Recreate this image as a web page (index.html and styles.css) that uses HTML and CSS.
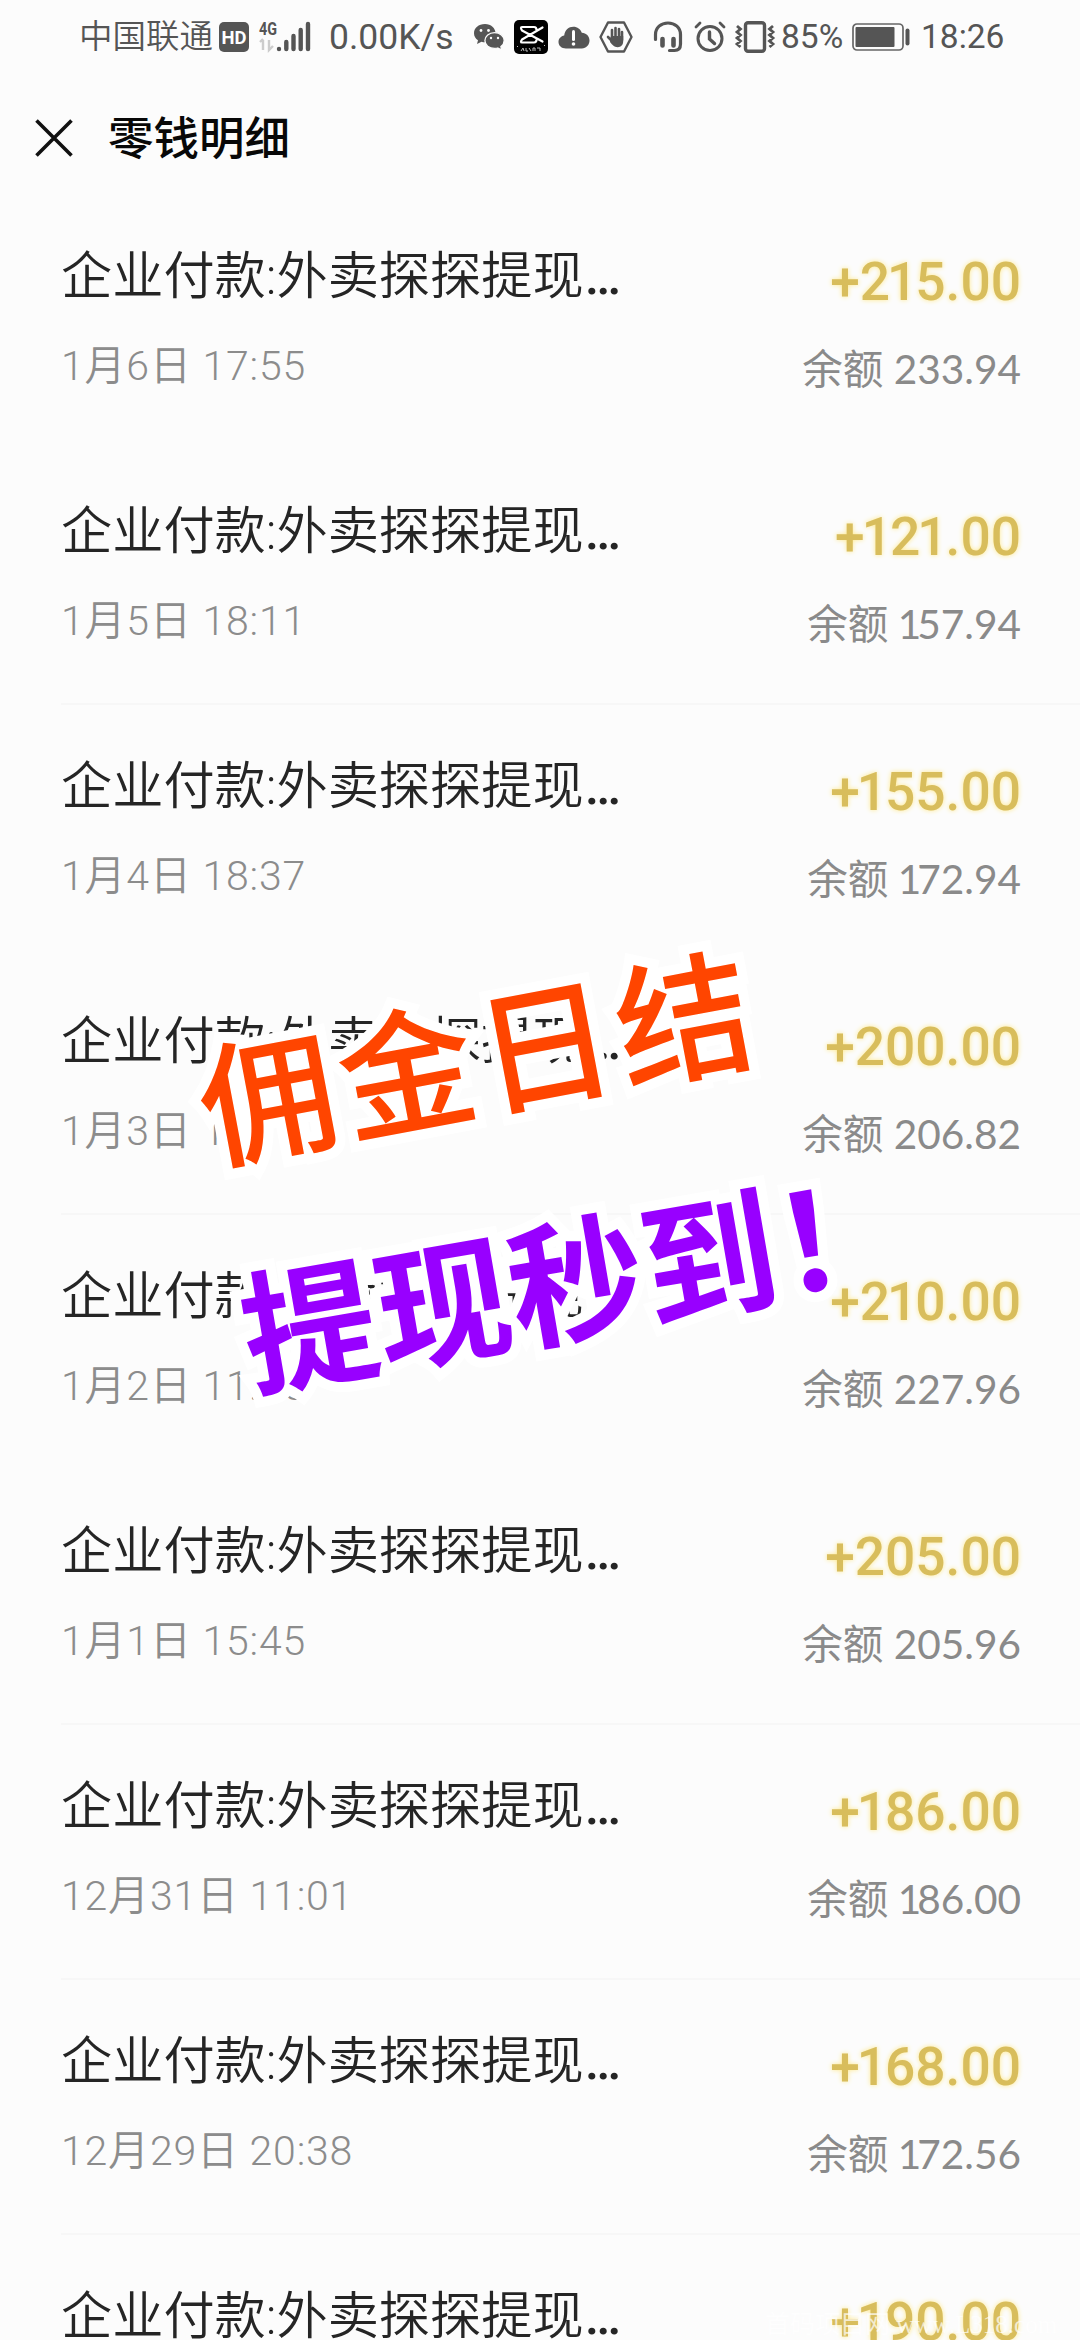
FILE: index.html
```html
<!DOCTYPE html>
<html lang="zh-CN">
<head>
<meta charset="utf-8">
<title>零钱明细</title>
<link rel="stylesheet" href="styles.css">
</head>
<body>
<div class="screen">
  <div class="status">
    <span class="carrier">中国联通</span>
    <svg class="hd" width="30" height="30" viewBox="0 0 30 30"><rect width="30" height="30" rx="5" fill="#555"/><text x="15" y="22" text-anchor="middle" textLength="25" lengthAdjust="spacingAndGlyphs" font-family="Roboto, sans-serif" font-weight="700" font-size="19" fill="#fff">HD</text></svg>
    <svg class="signal" width="52" height="34" viewBox="0 0 52 34"><text x="0" y="16" textLength="18" lengthAdjust="spacingAndGlyphs" font-family="Roboto, sans-serif" font-weight="700" font-size="19" fill="#555">4G</text><g stroke="#555" stroke-width="4.4" stroke-linecap="round"><path d="M20 30v0M27.300 23v7M34.500 17v13M41.700 11v19M49 5v25"/></g><path d="M4 21v10M1 23l3-3M10 21v10l4-4" fill="none" stroke="#ccc" stroke-width="2.4"/></svg>
    <span class="speed">0.00K/s</span>
    <svg class="wechat" width="32" height="28" viewBox="0 0 32 28"><path d="M12 1C5.500 1 1 5 1 10.200c0 3 1.600 5.400 4 7L4 21l4.500-2.300c1.200.4 2.300.5 3.500.5 6 0 10.500-4 10.500-9S18 1 12 1z" fill="#555"/><path d="M21.500 9.600c5.500 0 9.700 3.500 9.700 8 0 2.500-1.300 4.600-3.300 6l.8 3.400-4-2c-1 .3-2 .4-3.200.4-5.400 0-9.600-3.400-9.600-7.800s4.200-8 9.600-8z" fill="#555" stroke="#fcfcfc" stroke-width="1.300"/><g fill="#fcfcfc"><circle cx="8" cy="7.500" r="1.400"/><circle cx="15.500" cy="7.500" r="1.400"/><circle cx="18" cy="15" r="1.200"/><circle cx="25" cy="15" r="1.200"/></g></svg>
    <svg class="capcut" width="34" height="34" viewBox="0 0 34 34"><rect width="34" height="34" rx="5" fill="#000"/><path d="M28.500 7.500L8 19.500Q6 22.500 8 22.500h12q2.500 0 2.500-3M28.500 21.500L8 10.500Q6 7 8 7h12q2.500 0 2.500 3" fill="none" stroke="#fff" stroke-width="2.200" stroke-linejoin="round" stroke-linecap="round"/><path d="M3 26l1 1M7 31l2-3 1 3M12 28v3h2M15 28l2 3M19 31v-3h2v3M23 28h3v3M31 25l-1 1" fill="none" stroke="#bbb" stroke-width="1"/></svg>
    <svg class="cloud" width="32" height="23" viewBox="0 0 32 23"><path d="M8 22.500C3.500 22.500.5 19.600.5 16c0-3.400 2.500-6 5.700-6.500C7 4 10.600.700 15.300.7c4.200 0 7.200 2.500 8.500 6 4.500.2 7.700 3.500 7.700 7.800s-3.200 8-7.700 8z" fill="#555"/><path d="M15.500 5.500v8" stroke="#fff" stroke-width="3" stroke-linecap="round"/><circle cx="15.500" cy="18" r="1.800" fill="#fff"/></svg>
    <svg class="hand" width="34" height="32" viewBox="0 0 34 32"><path d="M9 1.500h16L32.500 16 25 30.500H9L1.500 16z" fill="none" stroke="#555" stroke-width="2.400" stroke-linejoin="round"/><g stroke="#555" stroke-width="2.600" stroke-linecap="round"><path d="M13 9v9M16.500 7v10M20 8v9M23 11v8M9 16l5 5"/></g><path d="M12 15h12.200v5c0 4-2.200 6.200-5.400 6.200-4 0-5.500-2.500-7.800-5.200z" fill="#555"/></svg>
    <svg class="headset" width="30" height="32" viewBox="0 0 30 32"><path d="M2.500 18.500v-5C2.500 6.500 8 2 15 2s12.500 4.500 12.500 11.500V23c0 4.500-2.500 6.500-6 6.500h-5" fill="none" stroke="#555" stroke-width="3.200" stroke-linecap="round"/><path d="M9.500 18v6.500M20.500 18v6.500" stroke="#555" stroke-width="4.600" stroke-linecap="round"/></svg>
    <svg class="alarm" width="32" height="32" viewBox="0 0 32 32"><g fill="none" stroke="#555" stroke-linecap="round"><circle cx="16" cy="17.500" r="12" stroke-width="3"/><path d="M15.500 11v7l5 4.500" stroke-width="3.400"/><path d="M2 6l4-4M30 6l-4-4" stroke-width="2.800"/></g></svg>
    <svg class="vibrate" width="40" height="32" viewBox="0 0 40 32"><rect x="10.500" y="1.800" width="19" height="28.400" rx="2.500" fill="none" stroke="#555" stroke-width="3.400"/><path d="M2 5l3.500 3L2 11l3.500 3L2 17l3.500 3L2 23l3.500 3M38 5l-3.500 3 3.500 3-3.500 3 3.500 3-3.500 3 3.500 3-3.500 3" fill="none" stroke="#555" stroke-width="2.800"/></svg>
    <span class="percent">85%</span>
    <svg class="battery" width="58" height="28" viewBox="0 0 58 28"><rect x="1" y="1" width="50" height="26" rx="4" fill="none" stroke="#666" stroke-width="1.700"/><rect x="3.500" y="4" width="39" height="20" rx="1" fill="#555"/><path d="M55.500 7.500v13" stroke="#555" stroke-width="4" stroke-linecap="round"/></svg>
    <span class="clock">18:26</span>
  </div>
  <header class="header">
    <svg width="38" height="38" viewBox="0 0 38 38"><path d="M1.500 1.500l35 35M36.500 1.500l-35 35" stroke="#111" stroke-width="3.600"/></svg>
    <h1>零钱明细</h1>
  </header>
  <main>
    <div class="row"><div class="left"><p class="name">企业付款:外卖探探提现<b>…</b></p><p class="date">1月6日 17:55</p></div><div class="right"><p class="amount">+2<i>1</i>5.00</p><p class="balance">余额 233.94</p></div></div>
    <div class="row line"><div class="left"><p class="name">企业付款:外卖探探提现<b>…</b></p><p class="date">1月5日 18:11</p></div><div class="right"><p class="amount">+<i>1</i>2<i>1</i>.00</p><p class="balance">余额 <i>1</i>57.94</p></div></div>
    <div class="row"><div class="left"><p class="name">企业付款:外卖探探提现<b>…</b></p><p class="date">1月4日 18:37</p></div><div class="right"><p class="amount">+<i>1</i>55.00</p><p class="balance">余额 <i>1</i>72.94</p></div></div>
    <div class="row line"><div class="left"><p class="name">企业付款:外卖探探提现<b>…</b></p><p class="date">1月3日 1</p></div><div class="right"><p class="amount">+200.00</p><p class="balance">余额 206.82</p></div></div>
    <div class="row"><div class="left"><p class="name">企业付款:外卖探探提现<b>…</b></p><p class="date">1月2日 11:15</p></div><div class="right"><p class="amount">+2<i>1</i>0.00</p><p class="balance">余额 227.96</p></div></div>
    <div class="row line"><div class="left"><p class="name">企业付款:外卖探探提现<b>…</b></p><p class="date">1月1日 15:45</p></div><div class="right"><p class="amount">+205.00</p><p class="balance">余额 205.96</p></div></div>
    <div class="row line"><div class="left"><p class="name">企业付款:外卖探探提现<b>…</b></p><p class="date">12月31日 11:01</p></div><div class="right"><p class="amount">+<i>1</i>86.00</p><p class="balance">余额 <i>1</i>86.00</p></div></div>
    <div class="row line"><div class="left"><p class="name">企业付款:外卖探探提现<b>…</b></p><p class="date">12月29日 20:38</p></div><div class="right"><p class="amount">+<i>1</i>68.00</p><p class="balance">余额 <i>1</i>72.56</p></div></div>
    <div class="row"><div class="left"><p class="name">企业付款:外卖探探提现<b>…</b></p></div><div class="right"><p class="amount">+<i>1</i>90.00</p></div></div>
  </main>
  <div class="sticker orange">佣金日结</div>
  <div class="sticker purple">提现秒到！</div>
  <div class="watermark">首码项目网 www.L318.com</div>
</div>
</body>
</html>
```
FILE: styles.css
```css
* { box-sizing: border-box; }
body { margin: 0; background: #fcfcfc; font-family: Roboto, "Noto Sans CJK SC", sans-serif; }
p, h1 { margin: 0; }
i { font-style: normal; }
.screen { position: relative; width: 1080px; height: 2340px; overflow: hidden; background: #fcfcfc; }

.status { display: flex; align-items: center; height: 74px; padding-left: 79px; color: #555; font-size: 34px; line-height: 74px; white-space: nowrap; }
.status svg { flex: none; overflow: visible; }
.carrier { width: 135px; font-size: 33.5px; font-weight: 350; }
.hd { margin-left: 5px; margin-top: -1px; }
.signal { margin-left: 10px; margin-top: -2px; }
.speed { width: 126px; margin-left: 18px; font-size: 35.500px; }
.wechat { margin-left: 18px; }
.capcut { margin-left: 9px; }
.cloud { margin-left: 10px; }
.hand { margin-left: 9px; }
.headset { margin-left: 20px; }
.alarm { margin-left: 11px; }
.vibrate { margin-left: 9px; }
.percent { margin-left: 6px; width: 62px; font-size: 33.500px; }
.battery { margin-left: 9px; }
.clock { margin-left: 11px; font-size: 33.500px; }

.header { display: flex; align-items: center; gap: 35px; height: 121px; padding: 12px 0 0 35px; }
.header svg { margin-bottom: 6px; }
.header h1 { margin-top: -1px; font-size: 45.500px; line-height: 60px; font-weight: 500; color: #080808; }

.row { display: flex; justify-content: space-between; height: 255px; margin-left: 61px; padding-right: 59px; border-bottom: 2px solid transparent; }
.line { border-bottom-color: #f7f7f7; }
.left { padding-top: 47px; }
.right { padding-top: 52px; text-align: right; }
.name { font-size: 51.2px; line-height: 70px; color: #252525; font-weight: 350; }
.name b { margin-left: 1px; font-weight: 500; }
.date { margin-top: 24px; font-size: 41px; line-height: 60px; letter-spacing: .8px; color: #8c8c8c; font-weight: 350; }
.amount { font-size: 53.300px; line-height: 70px; font-weight: 500; color: #d8bd5c; text-shadow: 0 0 5px #ffe98a; }
.amount i { margin: 0 -2px 0 -3px; }
.balance { margin-top: 22px; font: 400 40.600px/60px Lato, "Noto Sans CJK SC", sans-serif; color: #8a8a8a; }
.balance i { margin: 0 -4px 0 -1px; }

.sticker { position: absolute; white-space: nowrap; transform-origin: 0 50%; -webkit-text-stroke: 20px #fff; paint-order: stroke fill; stroke-linejoin: round; }
.orange { left: 202px; top: 1016px; font-size: 136px; line-height: 200px; letter-spacing: 5px; font-weight: 500; color: #ff4500; transform: rotate(-10.700deg); }
.purple { left: 244px; top: 1243px; font-size: 135px; line-height: 200px; font-weight: 700; color: #9800ff; transform: rotate(-9.800deg); }

.watermark { position: absolute; left: 765px; bottom: 1px; font: 25px/28px "Liberation Serif", "Noto Sans CJK SC", serif; color: #fff; opacity: .7; white-space: nowrap; }
```
